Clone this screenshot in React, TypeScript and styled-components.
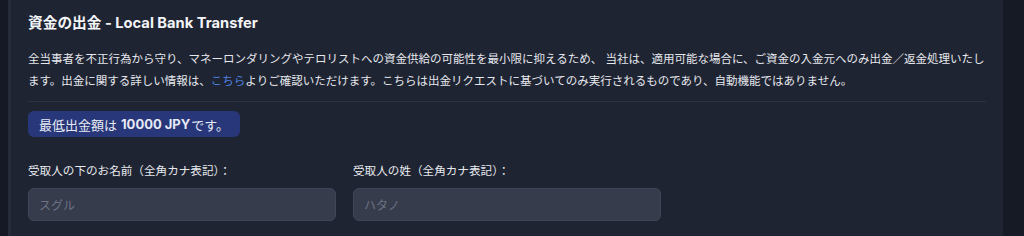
import styled, { createGlobalStyle } from "styled-components";

const GlobalStyle = createGlobalStyle`
  html, body {
    margin: 0;
    padding: 0;
    background: #161a25;
    font-family: "Inter", "Noto Sans CJK JP", sans-serif;
    overflow: hidden;
  }
`;

const Page = styled.div`
  display: flex;
  height: 236px;
  background: #161a25;
`;

const SideStrip = styled.div`
  width: 8px;
  flex-shrink: 0;
  background: #151925;
`;

const Panel = styled.div`
  width: 995px;
  flex-shrink: 0;
  box-sizing: border-box;
  padding: 12px 17px 0 17px;
  background: #1f2433;
  border-left: 3px solid #262b39;
`;

const Title = styled.h2`
  margin: 0;
  font-size: 14.7px;
  line-height: 22px;
  font-weight: 700;
  color: #f3f4f7;
`;

const Notice = styled.p`
  margin: 14px 0 0;
  font-size: 11.5px;
  line-height: 22px;
  color: #e6e8ed;
  width: 962px;

  & a {
    color: #4d82e0;
    text-decoration: none;
  }
`;

const Divider = styled.hr`
  margin: 9px 0 0;
  width: 958px;
  border: 0;
  border-top: 1px solid #2e3342;
`;

const Badge = styled.div`
  display: inline-flex;
  align-items: center;
  margin-top: 9px;
  height: 26px;
  padding: 0 11px;
  box-sizing: border-box;
  border-radius: 6px;
  background: #27377a;
  color: #e7eaf5;
  font-size: 13px;

  & b {
    font-weight: 700;
    margin: 0 1px 0 4px;
  }
`;

const FieldRow = styled.div`
  display: flex;
  gap: 17px;
  margin-top: 25px;
`;

const Field = styled.div`
  display: flex;
  flex-direction: column;
  gap: 8px;
  width: 308px;
`;

const Label = styled.label`
  font-size: 11.6px;
  line-height: 18px;
  color: #e8eaee;
`;

const Input = styled.input`
  height: 33px;
  box-sizing: border-box;
  padding: 0 10px;
  border-radius: 6px;
  border: 1px solid #40455a;
  background: #373c4c;
  color: #e4e6eb;
  font-family: "Noto Sans CJK JP", sans-serif;
  font-size: 12px;
  outline: none;

  &::placeholder {
    color: #6b7183;
  }
`;

export default function App() {
  return (
    <Page>
      <GlobalStyle />
      <SideStrip />
      <Panel>
        <Title>資金の出金 - Local Bank Transfer</Title>
        <Notice>
          全当事者を不正行為から守り、マネーロンダリングやテロリストへの資金供給の可能性を最小限に抑えるため、
          当社は、適用可能な場合に、ご資金の入金元へのみ出金／返金処理いたします。出金に関する詳しい情報は、
          <a href="#">こちら</a>
          よりご確認いただけます。こちらは出金リクエストに基づいてのみ実行されるものであり、自動機能ではありません。
        </Notice>
        <Divider />
        <Badge>
          最低出金額は<b>10000 JPY</b>です。
        </Badge>
        <FieldRow>
          <Field>
            <Label>受取人の下のお名前（全角カナ表記）：</Label>
            <Input placeholder="スグル" />
          </Field>
          <Field>
            <Label>受取人の姓（全角カナ表記）：</Label>
            <Input placeholder="ハタノ" />
          </Field>
        </FieldRow>
      </Panel>
    </Page>
  );
}
